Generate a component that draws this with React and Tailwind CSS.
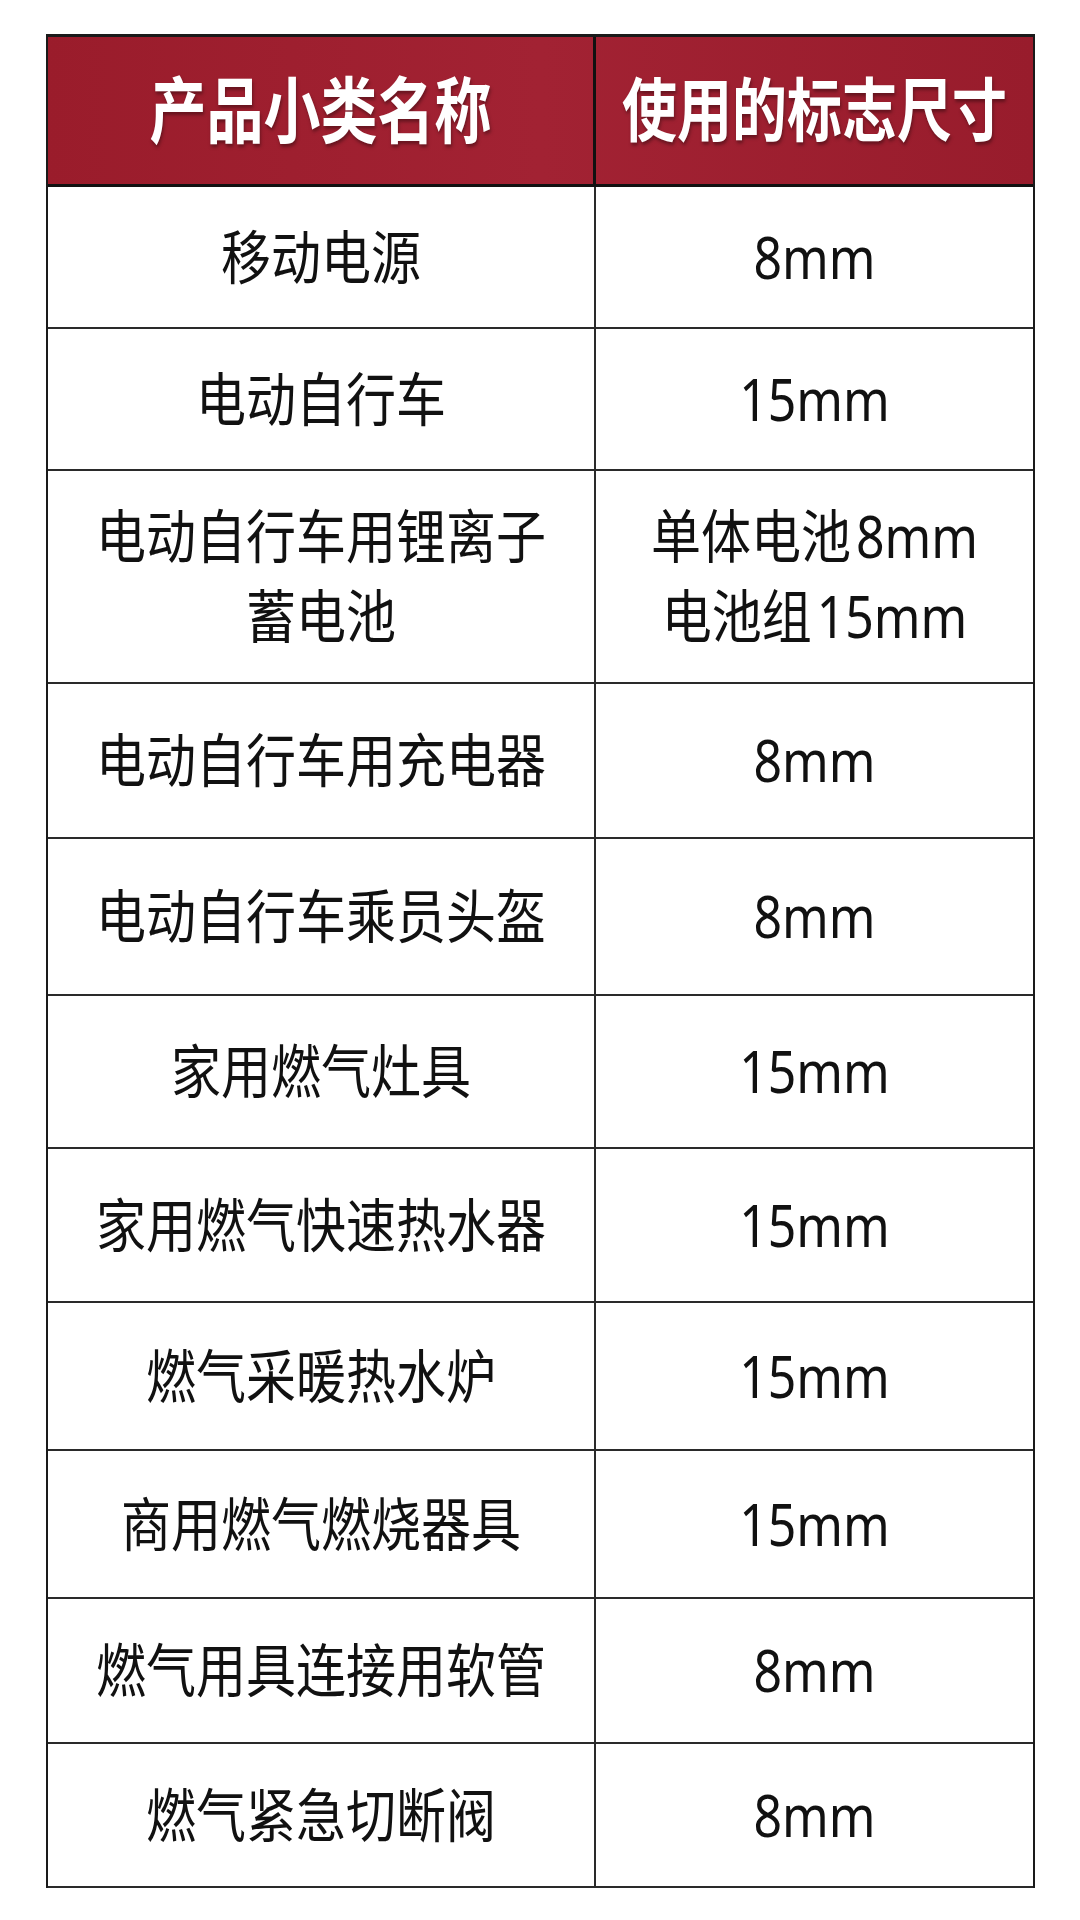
const ROWS = [
  { name: ["移动电源"], size: ["8mm"], h: "h-[142px]" },
  { name: ["电动自行车"], size: ["15mm"], h: "h-[142px]" },
  { name: ["电动自行车用锂离子", "蓄电池"], size: ["单体电池\u200A8mm", "电池组\u200A15mm"], h: "h-[213px]" },
  { name: ["电动自行车用充电器"], size: ["8mm"], h: "h-[155px]" },
  { name: ["电动自行车乘员头盔"], size: ["8mm"], h: "h-[157px]" },
  { name: ["家用燃气灶具"], size: ["15mm"], h: "h-[153px]" },
  { name: ["家用燃气快速热水器"], size: ["15mm"], h: "h-[154px]" },
  { name: ["燃气采暖热水炉"], size: ["15mm"], h: "h-[148px]" },
  { name: ["商用燃气燃烧器具"], size: ["15mm"], h: "h-[148px]" },
  { name: ["燃气用具连接用软管"], size: ["8mm"], h: "h-[145px]" },
  { name: ["燃气紧急切断阀"], size: ["8mm"], h: "h-[144px]" },
];

const FONT = "font-['Noto_Sans','Noto_Sans_CJK_SC',sans-serif]";

function Cell({ lines, className = "" }) {
  return (
    <div className={`flex items-center justify-center ${className}`}>
      <div className="scale-y-[1.16] text-center text-[50px] leading-[69px] text-[#111]">
        {lines.map((l) => (
          <div key={l}>{l}</div>
        ))}
      </div>
    </div>
  );
}

export default function App() {
  return (
    <div className={`min-h-[1920px] w-[1080px] bg-white pt-[34px] pl-[46px] ${FONT}`}>
      <div className="w-[989px] border-t-[3px] border-r-2 border-l-2 border-[#1a1a1a]">
        {/* header */}
        <div className="grid h-[150px] grid-cols-[548px_1fr] border-b-[3px] border-[#111] bg-[#9d1e2e] bg-gradient-to-r from-[#9a1c2b] via-[#a22233] to-[#981c2c]">
          <div className="flex items-center justify-center border-r-[3px] border-[#111]">
            <span className="scale-y-[1.25] text-[57px] font-bold text-white [text-shadow:1px_2px_3px_rgba(0,0,0,0.35)]">
              产品小类名称
            </span>
          </div>
          <div className="flex items-center justify-center">
            <span className="scale-y-[1.25] text-[55px] font-bold text-white [text-shadow:1px_2px_3px_rgba(0,0,0,0.35)]">
              使用的标志尺寸
            </span>
          </div>
        </div>

        {/* body rows */}
        {ROWS.map((r, i) => (
          <div
            key={i}
            className={`grid grid-cols-[548px_1fr] border-b-2 border-[#2a2a2a] ${r.h}`}
          >
            <Cell lines={r.name} className="border-r-2 border-[#2a2a2a]" />
            <Cell lines={r.size} />
          </div>
        ))}
      </div>
    </div>
  );
}
